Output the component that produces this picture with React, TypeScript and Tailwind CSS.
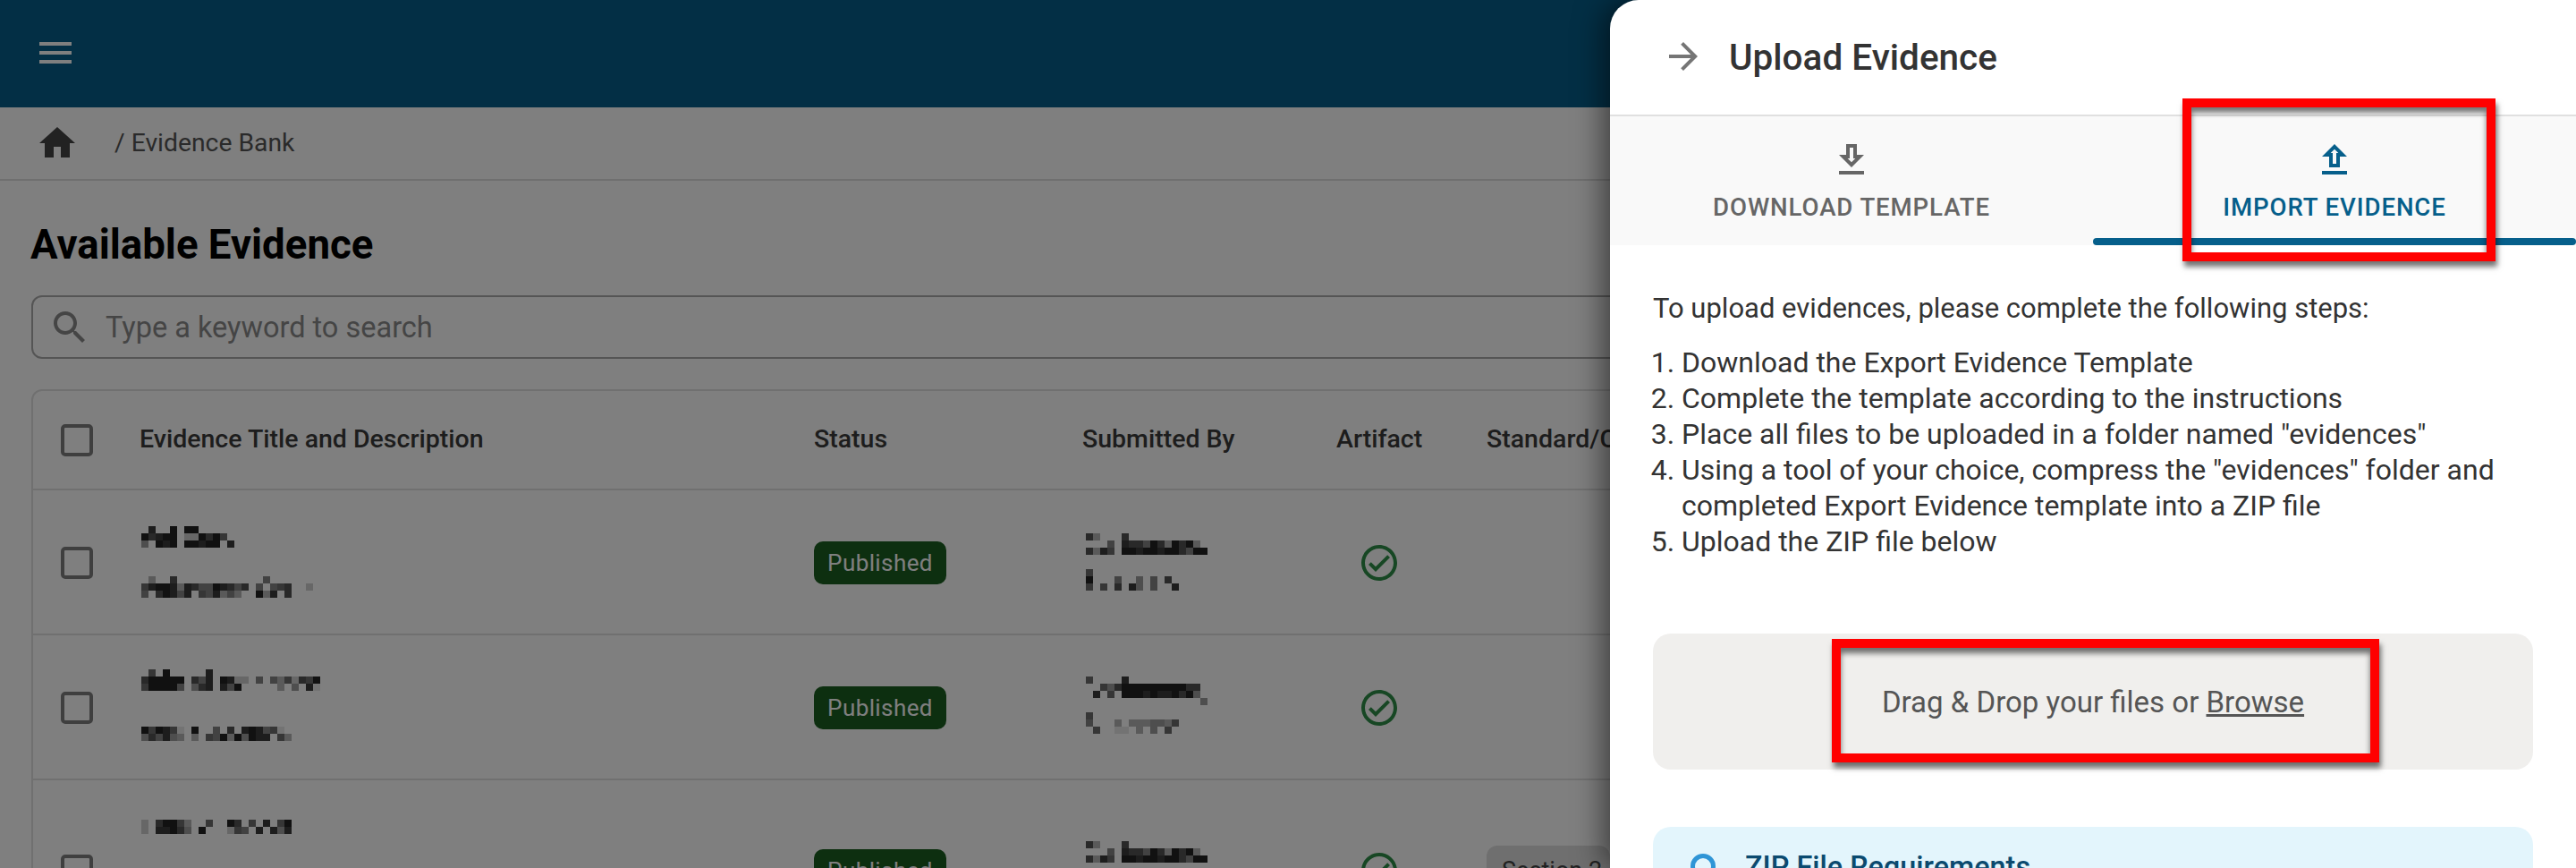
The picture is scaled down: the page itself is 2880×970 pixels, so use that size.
import React from 'react';

type Block = { y: number; rows: string[] };

const titleCols = 'w-[754px]';

const rows: { height: string; title: Block[]; by: Block[]; chip?: boolean }[] = [
  {
    height: 'h-[162px]',
    title: [
      { y: 40, rows: ['.8..9.99.....', '97899.229796.', '4.989.99899.8'] },
      { y: 96, rows: ['.3..7............5', '689983875598757.5.567..2', '5.79858.658353..938.7'] },
    ],
    by: [
      { y: 48, rows: ['73...7', '...5.87759739793', '7386.998998997599'] },
      { y: 88, rows: ['6', '9...5..4.5.7', '6.6.7.84.5..8'] },
    ],
  },
  {
    height: 'h-[162px]',
    title: [
      { y: 38, rows: ['.6.9.....8', '799999.758.9822.5.5362769', '699995.478.859.....3.4.81'] },
      { y: 102, rows: ['969861.9..5.7.898561', '475843.3.659394988.63'] },
    ],
    by: [
      { y: 46, rows: ['6....8', '..64799999999977', '.8.6.99989889794', '................4'] },
      { y: 86, rows: ['6', '5...3.3334436', '.6..11.3.4.6'] },
    ],
  },
  {
    height: 'h-[202px]',
    title: [{ y: 44, rows: ['2.79963..6..97.6.8.69', '2.88974.9...265.8.848'] }],
    by: [{ y: 68, rows: ['73...7', '...5.87759739793', '7386.998998997599'] }],
    chip: true,
  },
];

// blurred-out names in the screenshot, 8px cells
function Mosaic({ blocks, x }: { blocks: Block[]; x: number }) {
  return (
    <svg className="h-full w-[220px] shrink-0" aria-hidden="true">
      {blocks.map((b) =>
        b.rows.map((line, r) =>
          line.split('').map((c, i) =>
            c === '.' ? null : (
              <rect
                key={`${b.y}-${r}-${i}`}
                x={x + i * 8}
                y={b.y + r * 8}
                width="8"
                height="8"
                fill="#222"
                fillOpacity={Number(c) / 9}
              />
            ),
          ),
        ),
      )}
    </svg>
  );
}

function MuiIcon({ d, className }: { d: string; className: string }) {
  return (
    <svg viewBox="0 0 24 24" fill="currentColor" className={className} aria-hidden="true">
      <path d={d} />
    </svg>
  );
}

function Checkbox() {
  return <div className="w-9 h-9 border-4 border-[#7f7f7f] rounded-[5px] shrink-0 ml-[31px]" />;
}

function Marker({ className }: { className: string }) {
  return (
    <div
      className={`absolute border-y-[10px] border-x-[10px] border-[#ff0000] shadow-[2px_6px_6px_rgba(0,0,0,0.55),inset_0_6px_6px_rgba(0,0,0,0.55)] ${className}`}
    />
  );
}

function Page() {
  return (
    <div className="bg-white h-[970px] flex flex-col">
      <div className="h-[120px] bg-[#065f8b] flex items-center pl-[38px] shrink-0">
        <MuiIcon d="M3 18h18v-2H3v2zm0-5h18v-2H3v2zm0-7v2h18V6H3z" className="w-12 h-12 text-white -mt-[2px]" />
      </div>

      <div className="h-[82px] border-b-2 border-[#dfdfdf] flex items-center pl-[40px] shrink-0">
        <MuiIcon d="M10 20v-6h4v6h5v-8h3L12 3 2 12h3v8z" className="w-12 h-12 text-[#444]" />
        <span className="ml-[40px] text-[28.3px] text-[#555]">/ Evidence Bank</span>
      </div>

      <div className="px-[35px] flex flex-col">
        <h1 className="mt-[42px] -ml-[1px] h-[60px] leading-[60px] text-[45.6px] font-bold text-black">Available Evidence</h1>

        <div className="mt-[26px] h-[71px] border-2 border-[#aaa] rounded-xl flex items-center pl-[17px]">
          <MuiIcon
            d="M15.5 14h-.79l-.28-.27C15.41 12.59 16 11.11 16 9.5 16 5.91 13.09 3 9.5 3S3 5.91 3 9.5 5.91 16 9.5 16c1.61 0 3.09-.59 4.23-1.57l.27.28v.79l5 4.99L20.49 19l-4.99-5zm-6 0C7.01 14 5 11.99 5 9.5S7.01 5 9.5 5 14 7.01 14 9.5 11.99 14 9.5 14z"
            className="w-12 h-12 text-[#8a8a8a]"
          />
          <span className="ml-[16px] pt-[2px] text-[32.5px] text-[#8a8a8a]">Type a keyword to search</span>
        </div>

        <div className="mt-[34px] border-2 border-[#e0e0e0] rounded-t-xl">
          <div className="h-[111px] flex items-center border-b-2 border-[#e0e0e0] text-[28.5px] font-medium text-[#3a3a3a]">
            <div className="w-[119px] shrink-0">
              <Checkbox />
            </div>
            <div className={`${titleCols} shrink-0`}>Evidence Title and Description</div>
            <div className="w-[300px] shrink-0">Status</div>
            <div className="w-[284px] shrink-0">Submitted By</div>
            <div className="w-[168px] shrink-0">Artifact</div>
            <div>Standard/Criteria</div>
          </div>

          {rows.map((row, i) => (
            <div key={i} className={`${row.height} flex items-center border-b-2 border-[#e0e0e0]`}>
              <div className="w-[119px] shrink-0 mt-[2px]">
                <Checkbox />
              </div>
              <div className={`${titleCols} shrink-0 h-full`}>
                <Mosaic blocks={row.title} x={2} />
              </div>
              <div className="w-[300px] shrink-0 mt-[2px]">
                <span className="inline-flex items-center justify-center w-[148px] h-[48px] rounded-[10px] bg-[#1b5e20] text-white text-[26px] tracking-[0.4px]">
                  Published
                </span>
              </div>
              <div className="w-[284px] shrink-0 h-full">
                <Mosaic blocks={row.by} x={4} />
              </div>
              <div className="w-[168px] shrink-0 flex pl-[24px] mt-[2px]">
                <MuiIcon
                  d="M16.59 7.58 10 14.17l-2.59-2.58L6 13l4 4 8-8zM12 2C6.48 2 2 6.48 2 12s4.48 10 10 10 10-4.48 10-10S17.52 2 12 2zm0 18c-4.42 0-8-3.58-8-8s3.58-8 8-8 8 3.58 8 8-3.58 8-8 8z"
                  className="w-12 h-12 text-[#2f8f48]"
                />
              </div>
              {row.chip && (
                <span className="h-[56px] w-[138px] mt-[2px] pl-[17px] rounded-xl bg-[#dedede] text-[#444] text-[27px] flex items-center whitespace-nowrap">
                  Section 2
                </span>
              )}
            </div>
          ))}
        </div>
      </div>
    </div>
  );
}

function Drawer() {
  return (
    <div className="absolute right-0 top-0 w-[1080px] h-[970px] bg-white rounded-tl-[32px] overflow-hidden shadow-[-8px_0_32px_rgba(0,0,0,0.5)]">
      <div className="h-[130px] border-b-2 border-[#e0e0e0] flex items-center pl-[58px]">
        <MuiIcon
          d="M12 4l-1.41 1.41L16.17 11H4v2h12.17l-5.58 5.59L12 20l8-8z"
          className="w-12 h-12 text-[#757575] -mt-[2px]"
        />
        <h2 className="ml-[27px] text-[40.5px] font-medium text-[#333]">Upload Evidence</h2>
      </div>

      <div className="h-[144px] bg-[#f9f9f9] flex">
        <div className="w-[540px] flex flex-col items-center pt-[25px] text-[#666]">
          <MuiIcon d="M19 9h-4V3H9v6H5l7 7 7-7zm-8 2V5h2v6h1.17L12 13.17 9.83 11H11zm-6 7h14v2H5z" className="w-12 h-12" />
          <span className="mt-[13px] text-[27.6px] font-medium tracking-[0.9px] leading-[32px]">DOWNLOAD TEMPLATE</span>
        </div>
        <div className="w-[540px] flex flex-col items-center pt-[25px] text-[#065f8b] relative">
          <MuiIcon d="M9 16h6v-6h4l-7-7-7 7h4v6zm3-10.17L14.17 8H13v6h-2V8H9.83L12 5.83zM5 18h14v2H5z" className="w-12 h-12" />
          <span className="mt-[13px] text-[27.6px] font-medium tracking-[0.9px] leading-[32px]">IMPORT EVIDENCE</span>
          <div className="absolute left-0 right-0 bottom-0 h-2 bg-[#065f8b] rounded-full" />
        </div>
      </div>

      <div className="px-[48px] text-[#333]">
        <p className="mt-[51px] text-[31px] leading-[40px]">To upload evidences, please complete the following steps:</p>
        <ol className="mt-[20px] list-decimal pl-[32px] text-[32px] leading-[40px]">
          <li>Download the Export Evidence Template</li>
          <li>Complete the template according to the instructions</li>
          <li>Place all files to be uploaded in a folder named "evidences"</li>
          <li>Using a tool of your choice, compress the "evidences" folder and completed Export Evidence template into a ZIP file</li>
          <li>Upload the ZIP file below</li>
        </ol>

        <div className="mt-[83px] h-[152px] pt-[2px] bg-[#f0efed] rounded-[20px] flex items-center justify-center text-[33px] text-[#555]">
          <span>
            Drag &amp; Drop your files or <span className="underline">Browse</span>
          </span>
        </div>

        <div className="mt-[64px] h-[120px] bg-[#e3f5fc] rounded-t-[20px] flex pl-[42px] pt-[30px]">
          <svg viewBox="0 0 28 28" className="w-7 h-7 shrink-0" aria-hidden="true">
            <circle cx="14" cy="14" r="11.5" fill="none" stroke="#2f95d6" strokeWidth="5" />
          </svg>
          <span className="ml-[33px] -mt-[3px] text-[32.4px] font-medium text-[#0b4a6f] leading-[36px]">ZIP File Requirements</span>
        </div>
      </div>

      <Marker className="left-[640px] top-[110px] w-[350px] h-[182px]" />
      <Marker className="left-[248px] top-[714px] w-[612px] h-[138px]" />
    </div>
  );
}

export default function App() {
  return (
    <div className="relative w-[2880px] h-[970px] overflow-hidden font-['Roboto',sans-serif]">
      <Page />
      <div className="absolute inset-0 bg-black/50" />
      <Drawer />
    </div>
  );
}
